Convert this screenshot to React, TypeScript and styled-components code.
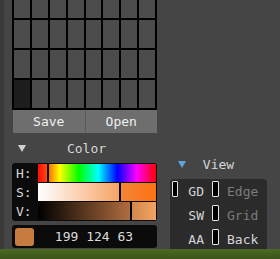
import React from "react";
import styled, { createGlobalStyle } from "styled-components";

const GlobalStyle = createGlobalStyle`
  html, body {
    margin: 0;
    padding: 0;
    background: #454545;
  }
  * {
    box-sizing: border-box;
  }
`;

const mono = `"DejaVu Sans Mono", "Liberation Mono", monospace`;

const Screen = styled.div`
  width: 280px;
  height: 259px;
  display: flex;
  flex-direction: column;
  overflow: hidden;
  font-family: ${mono};
  font-size: 13px;
  color: #d6d6d6;
`;

const Main = styled.div`
  flex: 1;
  display: flex;
  background: #454545;
`;

const Edge = styled.div`
  width: 4px;
  background: #3a3a3a;
`;

const LeftCol = styled.div`
  width: 161px;
  padding: 0 4px 0 8px;
  display: flex;
  flex-direction: column;
`;

const RightCol = styled.div`
  flex: 1;
  padding: 0 13px 0 5px;
  display: flex;
  flex-direction: column;
  justify-content: flex-end;
`;

const PaletteWrap = styled.div`
  width: 145px;
  height: 110px;
  overflow: hidden;
  display: flex;
  flex-direction: column;
  justify-content: flex-end;
`;

const Palette = styled.div`
  display: grid;
  grid-template-columns: repeat(8, 1fr);
  grid-auto-rows: 28px;
  gap: 2px;
  padding: 2px;
  background: #000;
`;

const Cell = styled.div<{ $empty?: boolean }>`
  background: ${(p) => (p.$empty ? "#1d1d1d" : "#4c4c4c")};
`;

const ButtonRow = styled.div`
  display: flex;
  width: 144px;
  height: 23px;
  margin-left: 1px;
  gap: 1px;
  background: #5a5a5a;
`;

const Button = styled.div`
  flex: 1;
  display: flex;
  align-items: center;
  justify-content: center;
  background: #6e6e6e;
  color: #f0f0f0;
`;

const Header = styled.div<{ $h: number; $pb?: number }>`
  height: ${(p) => p.$h}px;
  padding-bottom: ${(p) => p.$pb ?? 0}px;
  display: flex;
  align-items: center;
  position: relative;
  justify-content: center;
`;

const Arrow = styled.span<{ $color: string; $left: number }>`
  position: absolute;
  left: ${(p) => p.$left}px;
  width: 0;
  height: 0;
  border-left: 4px solid transparent;
  border-right: 4px solid transparent;
  border-top: 7px solid ${(p) => p.$color};
`;

const HsvBox = styled.div`
  width: 145px;
  display: grid;
  grid-template-columns: 26px 1fr;
  grid-auto-rows: 18px;
  row-gap: 1px;
  padding: 1px 1px 1px 0;
  background: #0b0b0b;
  border-radius: 3px;
`;

const Label = styled.div`
  display: flex;
  align-items: center;
  padding-left: 4px;
  color: #d8d8d8;
`;

const Bar = styled.div`
  display: flex;
  gap: 2px;
  background: #000;
`;

const Seg = styled.div<{ $bg: string }>`
  background: ${(p) => p.$bg};
  flex: 1;
`;

const SwatchRow = styled.div`
  margin-top: 4px;
  width: 145px;
  height: 23px;
  display: flex;
  align-items: center;
  padding: 0 3px;
  background: #0b0b0b;
  border-radius: 3px;
`;

const Swatch = styled.div<{ $color: string }>`
  width: 19px;
  height: 18px;
  border-radius: 3px;
  background: ${(p) => p.$color};
`;

const Rgb = styled.div`
  flex: 1;
  text-align: center;
  color: #dcdcdc;
`;

const ViewBox = styled.div`
  height: 70px;
  overflow: hidden;
  background: #2b2b2b;
  border-radius: 4px 4px 0 0;
  padding-left: 2px;
`;

const ViewRow = styled.div`
  height: 24px;
  display: grid;
  grid-template-columns: 6px 18px 7px 1fr;
  column-gap: 8px;
  align-items: center;
`;

const Check = styled.div`
  height: 16px;
  margin-top: -4px;
  border: 1px solid #e4e4e4;
  border-radius: 1px;
  background: #000;
`;

const Key = styled.div`
  text-align: right;
  color: #d4d4d4;
  white-space: nowrap;
`;

const Opt = styled.div<{ $dim?: boolean }>`
  color: ${(p) => (p.$dim ? "#7c7c7c" : "#d6d6d6")};
`;

const Ground = styled.div`
  height: 10px;
  background: linear-gradient(#4c6a23, #3a5419);
`;

const hueRest =
  "linear-gradient(to right, #ff7300 0%, #ffff00 10%, #00ff00 28%, #00ffff 46%, #0000ff 64%, #ff00ff 82%, #ff0000 100%)";

const bars = [
  { k: "H:", pct: 7.5, left: "linear-gradient(to right, #ff0a0a, #ff4a10)", right: hueRest },
  { k: "S:", pct: 68.3, left: "linear-gradient(to right, #ffffff, #f6a466)", right: "linear-gradient(to right, #f2853a, #ff7210)" },
  { k: "V:", pct: 78, left: "linear-gradient(to right, #000000, #b06c3e)", right: "linear-gradient(to right, #d0874c, #f4a462)" },
];

const views = [
  { check: true, key: "GD", opt: "Edge", dim: true },
  { check: false, key: "SW", opt: "Grid", dim: true },
  { check: false, key: "AA", opt: "Back", dim: false },
];

export default function App() {
  const cells = Array.from({ length: 32 }, (_, i) => i);
  return (
    <>
      <GlobalStyle />
      <Screen>
        <Main>
          <Edge />
          <LeftCol>
            <PaletteWrap>
              <Palette>
                {cells.map((i) => (
                  <Cell key={i} $empty={i === 24} />
                ))}
              </Palette>
            </PaletteWrap>
            <ButtonRow>
              <Button>Save</Button>
              <Button>Open</Button>
            </ButtonRow>
            <Header $h={30}>
              <Arrow $color="#d0d0d0" $left={6} />
              Color
            </Header>
            <HsvBox>
              {bars.map((b) => (
                <React.Fragment key={b.k}>
                  <Label>{b.k}</Label>
                  <Bar>
                    <Seg $bg={b.left} style={{ flex: `0 0 ${b.pct}%` }} />
                    <Seg $bg={b.right} />
                  </Bar>
                </React.Fragment>
              ))}
            </HsvBox>
            <SwatchRow>
              <Swatch $color="rgb(199,124,63)" />
              <Rgb>199 124 63</Rgb>
            </SwatchRow>
          </LeftCol>
          <RightCol>
            <Header $h={24} $pb={6}>
              <Arrow $color="#5ea6d6" $left={8} />
              View
            </Header>
            <ViewBox>
              {views.map((v) => (
                <ViewRow key={v.key}>
                  {v.check ? <Check /> : <span />}
                  <Key>{v.key}</Key>
                  <Check />
                  <Opt $dim={v.dim}>{v.opt}</Opt>
                </ViewRow>
              ))}
            </ViewBox>
          </RightCol>
        </Main>
        <Ground />
      </Screen>
    </>
  );
}
